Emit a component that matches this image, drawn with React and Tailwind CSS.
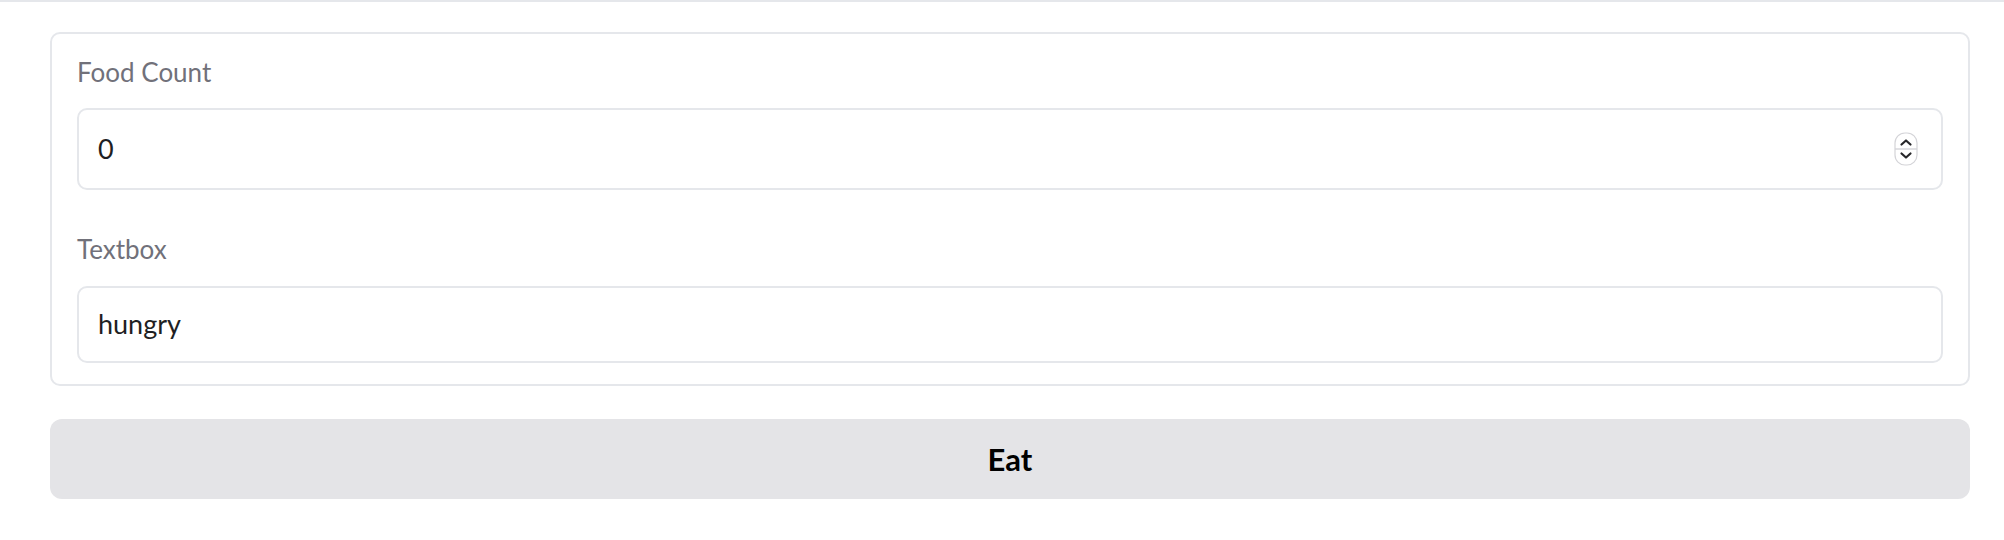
import React from "react";

function Spinner() {
  return (
    <svg width="24" height="34" viewBox="0 0 24 34" className="shrink-0">
      <rect x="1" y="1" width="22" height="32" rx="10" fill="#ffffff" stroke="#d4d4d8" strokeWidth="1.2" />
      <line x1="1" y1="17" x2="23" y2="17" stroke="#d4d4d8" strokeWidth="1.4" />
      <path d="M7.5 12.5 L12 8.5 L16.5 12.5" fill="none" stroke="#27272a" strokeWidth="2.2" strokeLinecap="round" strokeLinejoin="round" />
      <path d="M7.5 21.5 L12 25.5 L16.5 21.5" fill="none" stroke="#27272a" strokeWidth="2.2" strokeLinecap="round" strokeLinejoin="round" />
    </svg>
  );
}

export default function App() {
  return (
    <div
      className="w-full h-[540px] bg-white border-t-2 border-[#e5e7eb]"
      style={{ fontFamily: "Lato, 'Noto Sans', sans-serif" }}
    >
      <div className="pl-[50px] pr-[34px] pt-[30px]">
        <div className="border-2 border-[#e5e7eb] rounded-[10px] px-[25px] pt-[18px] pb-[21px]">
          <label className="block text-[26px] leading-[40px] text-[#71717a]">Food Count</label>
          <div className="mt-[16px] h-[82px] border-2 border-[#e5e7eb] rounded-[10px] flex items-center pl-[19px] pr-[23px]">
            <span className="flex-1 text-[27px] text-[#1f1f23]">0</span>
            <Spinner />
          </div>
          <label className="block mt-[39px] text-[26px] leading-[40px] text-[#71717a]">Textbox</label>
          <div className="mt-[17px] h-[77px] border-2 border-[#e5e7eb] rounded-[10px] flex items-center pl-[19px]">
            <span className="text-[27px] text-[#1f1f23]">hungry</span>
          </div>
        </div>
        <button className="mt-[33px] w-full h-[80px] rounded-[12px] bg-[#e4e4e7] text-[31px] font-bold text-black flex items-center justify-center">
          Eat
        </button>
      </div>
    </div>
  );
}
